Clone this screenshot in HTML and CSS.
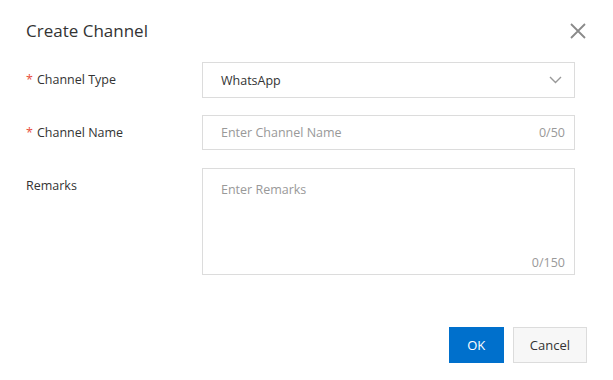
FILE: index.html
```html
<!DOCTYPE html>
<html lang="en">
<head>
  <meta charset="UTF-8" />
  <title>Create Channel</title>
  <link rel="stylesheet" href="styles.css">
</head>
<body>

  <div class="dialog">
    <div class="dialog-header">
      <h1>Create Channel</h1>
      <button class="close" type="button" aria-label="Close">
        <svg width="16" height="16" viewBox="0 0 16 16">
          <path d="M1 1 L15 15 M15 1 L1 15" stroke="#8a8a8a" stroke-width="1.8" fill="none"/>
        </svg>
      </button>
    </div>

    <form class="dialog-body">
      <div class="form-row">
        <label class="required">Channel Type</label>
        <div class="field select">
          <span class="value">WhatsApp</span>
          <svg class="arrow" width="13" height="8" viewBox="0 0 13 8">
            <path d="M1 1 L6.5 6.5 L12 1" stroke="#999" stroke-width="1.4" fill="none"/>
          </svg>
        </div>
      </div>

      <div class="form-row">
        <label class="required">Channel Name</label>
        <div class="field input">
          <span class="placeholder">Enter Channel Name</span>
          <span class="count">0/50</span>
        </div>
      </div>

      <div class="form-row">
        <label>Remarks</label>
        <div class="field textarea">
          <span class="placeholder">Enter Remarks</span>
          <span class="count">0/150</span>
        </div>
      </div>
    </form>

    <div class="dialog-footer">
      <button class="btn primary" type="button">OK</button>
      <button class="btn" type="button">Cancel</button>
    </div>
  </div>

</body>
</html>
```

FILE: styles.css
```css
* {
  box-sizing: border-box;
  font-family: 'Open Sans', 'Noto Sans', sans-serif;
}

body {
  margin: 0;
  background: #ffffff;
  color: #333333;
}

.dialog {
  width: 613px;
  height: 380px;
  padding: 0 26px;
}

.dialog-header {
  display: flex;
  align-items: center;
  justify-content: space-between;
  height: 62px;
}

h1 {
  margin: 0;
  margin-top: -1px;
  font-size: 17px;
  font-weight: 400;
  color: #333333;
  line-height: 1;
}

.close {
  background: none;
  border: none;
  padding: 0;
  margin-right: 1px;
  margin-top: -1px;
  width: 16px;
  height: 16px;
  cursor: pointer;
}

.close svg {
  display: block;
}

.dialog-body {
  padding-right: 12px;
}

.form-row {
  display: flex;
  margin-bottom: 17px;
}

.form-row:last-child {
  margin-bottom: 0;
}

label {
  width: 176px;
  flex-shrink: 0;
  font-size: 12.5px;
  line-height: 36px;
  color: #333333;
}

label.required::before {
  content: "*";
  color: #e84d3d;
  margin-right: 4px;
}

.field {
  flex: 1;
  border: 1px solid #dcdcdc;
  background: #ffffff;
  font-size: 12.5px;
  position: relative;
}

.select,
.input {
  height: 36px;
  display: flex;
  align-items: center;
  justify-content: space-between;
  padding: 0 12px 0 18px;
}

.input {
  height: 35px;
  padding-right: 9px;
}

.value {
  color: #333333;
}

.arrow {
  display: block;
}

.placeholder {
  color: #999999;
}

.count {
  color: #999999;
}

.textarea {
  height: 107px;
  padding: 12px 18px;
}

.textarea .count {
  position: absolute;
  right: 9px;
  bottom: 3px;
}

.dialog-footer {
  display: flex;
  justify-content: flex-end;
  gap: 9px;
  margin-top: 52px;
}

.btn {
  height: 36px;
  padding: 0 16px;
  border: 1px solid #dcdcdc;
  background: #f7f7f7;
  color: #333333;
  font-size: 13px;
  cursor: pointer;
}

.btn.primary {
  width: 55px;
  padding: 0;
  background: #0070cc;
  border-color: #0070cc;
  color: #ffffff;
}
```
